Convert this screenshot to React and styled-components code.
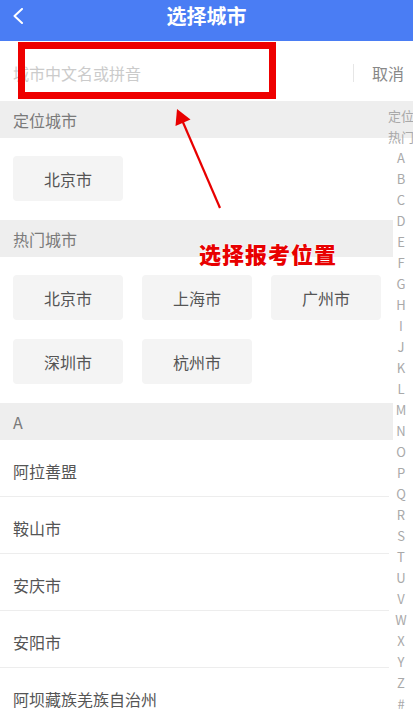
import React from "react";
import styled, { createGlobalStyle } from "styled-components";

const GlobalStyle = createGlobalStyle`
  html, body {
    margin: 0;
    padding: 0;
    background: #fff;
    overflow-x: hidden;
  }
  * { box-sizing: border-box; }
`;

const hotCities = ["北京市", "上海市", "广州市", "深圳市", "杭州市"];
const aCities = ["阿拉善盟", "鞍山市", "安庆市", "安阳市", "阿坝藏族羌族自治州"];
const indexKeys = ["定位", "热门", ..."ABCDEFGHIJKLMNOPQRSTUVWXYZ".split(""), "#"];

export default function App() {
  return (
    <>
      <GlobalStyle />
      <Page>
        <NavBar>
          <BackBtn>
            <svg width="12" height="16" viewBox="0 0 12 16">
              <path d="M10 1 L2.5 8 L10 15" fill="none" stroke="#fff" strokeWidth="2" strokeLinecap="round" strokeLinejoin="round" />
            </svg>
          </BackBtn>
          <Title>选择城市</Title>
        </NavBar>

        <SearchBar>
          <SearchInput placeholder="城市中文名或拼音" />
          <Divider />
          <CancelBtn>取消</CancelBtn>
        </SearchBar>

        <Body>
          <SectionHeader full>定位城市</SectionHeader>
          <ChipGrid>
            <Chip>北京市</Chip>
          </ChipGrid>

          <SectionHeader>热门城市</SectionHeader>
          <ChipGrid>
            {hotCities.map((c) => (
              <Chip key={c}>{c}</Chip>
            ))}
          </ChipGrid>

          <SectionHeader>A</SectionHeader>
          <CityList>
            {aCities.map((c) => (
              <CityRow key={c}>{c}</CityRow>
            ))}
          </CityList>

          <IndexBar>
            {indexKeys.map((k) => (
              <IndexItem key={k}>{k}</IndexItem>
            ))}
          </IndexBar>
        </Body>

        {/* red annotation drawn on top of the screenshot */}
        <MarkBox />
        <ArrowSvg width="413" height="260" viewBox="0 0 413 260">
          <line x1="220" y1="208" x2="182" y2="120" stroke="#e80000" strokeWidth="2.2" />
          <polygon points="177,109 190.5,119.5 175.5,126" fill="#e80000" />
        </ArrowSvg>
        <MarkLabel>选择报考位置</MarkLabel>
      </Page>
    </>
  );
}

const Page = styled.div`
  position: relative;
  width: 413px;
  height: 720px;
  overflow: hidden;
  font-family: "Noto Sans CJK SC", "Noto Sans", sans-serif;
  background: #fff;
`;

const NavBar = styled.div`
  position: relative;
  height: 41px;
  background: #4a7df4;
  display: flex;
  justify-content: center;
  align-items: flex-start;
  padding-top: 3px;
`;

const BackBtn = styled.div`
  position: absolute;
  left: 12px;
  top: 8px;
  width: 14px;
  height: 16px;
  display: flex;
`;

const Title = styled.div`
  color: #fff;
  font-size: 20px;
  font-weight: 700;
  line-height: 26px;
`;

const SearchBar = styled.div`
  height: 60px;
  display: flex;
  align-items: center;
  padding: 4px 9px 0 13px;
  background: #fff;
`;

const SearchInput = styled.input`
  flex: 1;
  min-width: 0;
  border: none;
  outline: none;
  padding: 0;
  font-family: inherit;
  font-size: 16px;
  color: #333;
  background: transparent;
  &::placeholder {
    color: #cbcbcb;
  }
`;

const Divider = styled.div`
  width: 1px;
  height: 18px;
  background: #e6e6e6;
  margin-right: 18px;
`;

const CancelBtn = styled.div`
  font-size: 16px;
  color: #888;
  line-height: 20px;
`;

const Body = styled.div`
  position: relative;
`;

const SectionHeader = styled.div`
  height: 37px;
  margin-right: ${(p) => (p.full ? "0" : "20px")};
  background: #eeeeee;
  display: flex;
  align-items: center;
  padding-left: 13px;
  font-size: 16px;
  color: #7a7a7a;
`;

const ChipGrid = styled.div`
  display: grid;
  grid-template-columns: repeat(3, 110px);
  gap: 19px 19px;
  padding: 18px 13px 19px;
`;

const Chip = styled.div`
  height: 45px;
  border-radius: 4px;
  background: #f4f4f4;
  display: flex;
  align-items: center;
  justify-content: center;
  font-size: 16px;
  color: #555;
`;

const CityList = styled.div`
  margin-right: 24px;
`;

const CityRow = styled.div`
  height: 57px;
  display: flex;
  align-items: center;
  padding: 6px 0 0 13px;
  border-bottom: 1px solid #ededed;
  font-size: 16px;
  color: #555;
`;

const IndexBar = styled.div`
  position: absolute;
  top: 4px;
  left: 388px;
  width: 26px;
  display: flex;
  flex-direction: column;
`;

const IndexItem = styled.div`
  height: 21px;
  line-height: 21px;
  text-align: center;
  white-space: nowrap;
  font-size: 13px;
  color: #a9a9a9;
`;

const MarkBox = styled.div`
  position: absolute;
  left: 18px;
  top: 42px;
  width: 258px;
  height: 57px;
  border: 7px solid #ee0000;
`;

const ArrowSvg = styled.svg`
  position: absolute;
  left: 0;
  top: 0;
  pointer-events: none;
`;

const MarkLabel = styled.div`
  position: absolute;
  left: 199px;
  top: 239px;
  font-size: 22px;
  line-height: 28px;
  font-weight: 900;
  letter-spacing: 1px;
  color: #e80000;
  text-shadow: 0 0 2px #fff, 0 0 2px #fff;
`;
